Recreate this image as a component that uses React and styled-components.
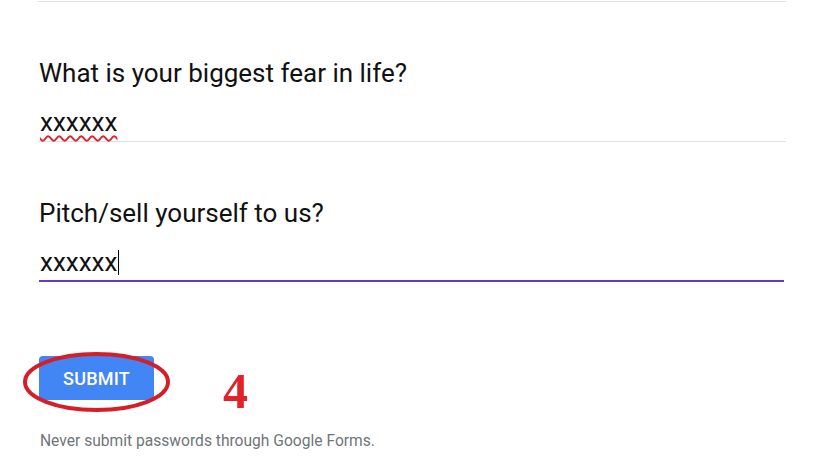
import React from 'react';
import styled, { createGlobalStyle } from 'styled-components';

const GlobalStyle = createGlobalStyle`
   body {
      margin: 0;
      background: #fff;
      font-family: Roboto, "Noto Sans", Arial, sans-serif;
   }
`;

const questions = [
   { title: 'What is your biggest fear in life?', answer: 'xxxxxx', misspelled: true },
   { title: 'Pitch/sell yourself to us?', answer: 'xxxxxx', focused: true },
];

const App = () => {
   return (
      <>
         <GlobalStyle />
         <StyledForm>
            <StyledDivider />
            {questions.map((q) => (
               <StyledQuestion key={q.title}>
                  <StyledTitle>{q.title}</StyledTitle>
                  <StyledAnswer $focused={q.focused}>
                     <StyledValue $misspelled={q.misspelled}>{q.answer}</StyledValue>
                     {q.focused && <StyledCaret />}
                  </StyledAnswer>
               </StyledQuestion>
            ))}
            <StyledActions>
               <StyledSubmit>SUBMIT</StyledSubmit>
               <StyledCircle viewBox="0 0 147 60">
                  <ellipse cx="73.5" cy="30" rx="71.5" ry="28" fill="none" stroke="#d61e29" strokeWidth="4" />
               </StyledCircle>
               <StyledStep>4</StyledStep>
            </StyledActions>
            <StyledNote>Never submit passwords through Google Forms.</StyledNote>
         </StyledForm>
      </>
   );
};

const StyledForm = styled.div`
   width: 748px;
   margin-left: 38px;
`;

const StyledDivider = styled.div`
   height: 1px;
   margin-top: 1px;
   background: #e0e0e0;
`;

const StyledQuestion = styled.div`
   padding-top: 55px;
`;

const StyledTitle = styled.div`
   font-size: 26px;
   line-height: 32px;
   color: #111;
   padding-left: 1px;
`;

const StyledAnswer = styled.div`
   display: flex;
   align-items: center;
   margin-top: 17px;
   padding: 0 0 ${({ $focused }) => ($focused ? '2px' : '3px')} 2px;
   border-bottom: ${({ $focused }) => ($focused ? '2px solid #673ab7' : '1px solid #e0e0e0')};
   ${({ $focused }) => $focused && 'margin-right: 2px; margin-left: 1px; padding-left: 1px;'}
`;

const StyledValue = styled.span`
   font-size: 26px;
   line-height: 32px;
   color: #111;
   text-decoration: ${({ $misspelled }) => ($misspelled ? 'underline wavy #e0202a' : 'none')};
   text-decoration-thickness: 2px;
   text-underline-offset: 4px;
`;

const StyledCaret = styled.span`
   width: 1px;
   height: 25px;
   background: #000;
   margin-left: 1px;
`;

const StyledActions = styled.div`
   position: relative;
   display: flex;
   align-items: flex-start;
   height: 60px;
   margin-top: 74px;
`;

const StyledSubmit = styled.button`
   width: 115px;
   height: 44px;
   margin-left: 1px;
   border: none;
   border-radius: 4px;
   background: #4285f4;
   color: #fff;
   font-family: Roboto, Arial, sans-serif;
   font-size: 18px;
   font-weight: 500;
   letter-spacing: 0.2px;
`;

const StyledCircle = styled.svg`
   position: absolute;
   left: -15px;
   top: -4px;
   width: 147px;
   height: 60px;
`;

const StyledStep = styled.div`
   margin: 10px 0 0 69px;
   font-family: "Liberation Serif", "Times New Roman", serif;
   font-size: 50px;
   font-weight: 700;
   line-height: 50px;
   color: #e0232b;
`;

const StyledNote = styled.div`
   margin-top: 15px;
   padding-left: 2px;
   font-size: 15.6px;
   line-height: 20px;
   color: #70757a;
`;

export default App;
